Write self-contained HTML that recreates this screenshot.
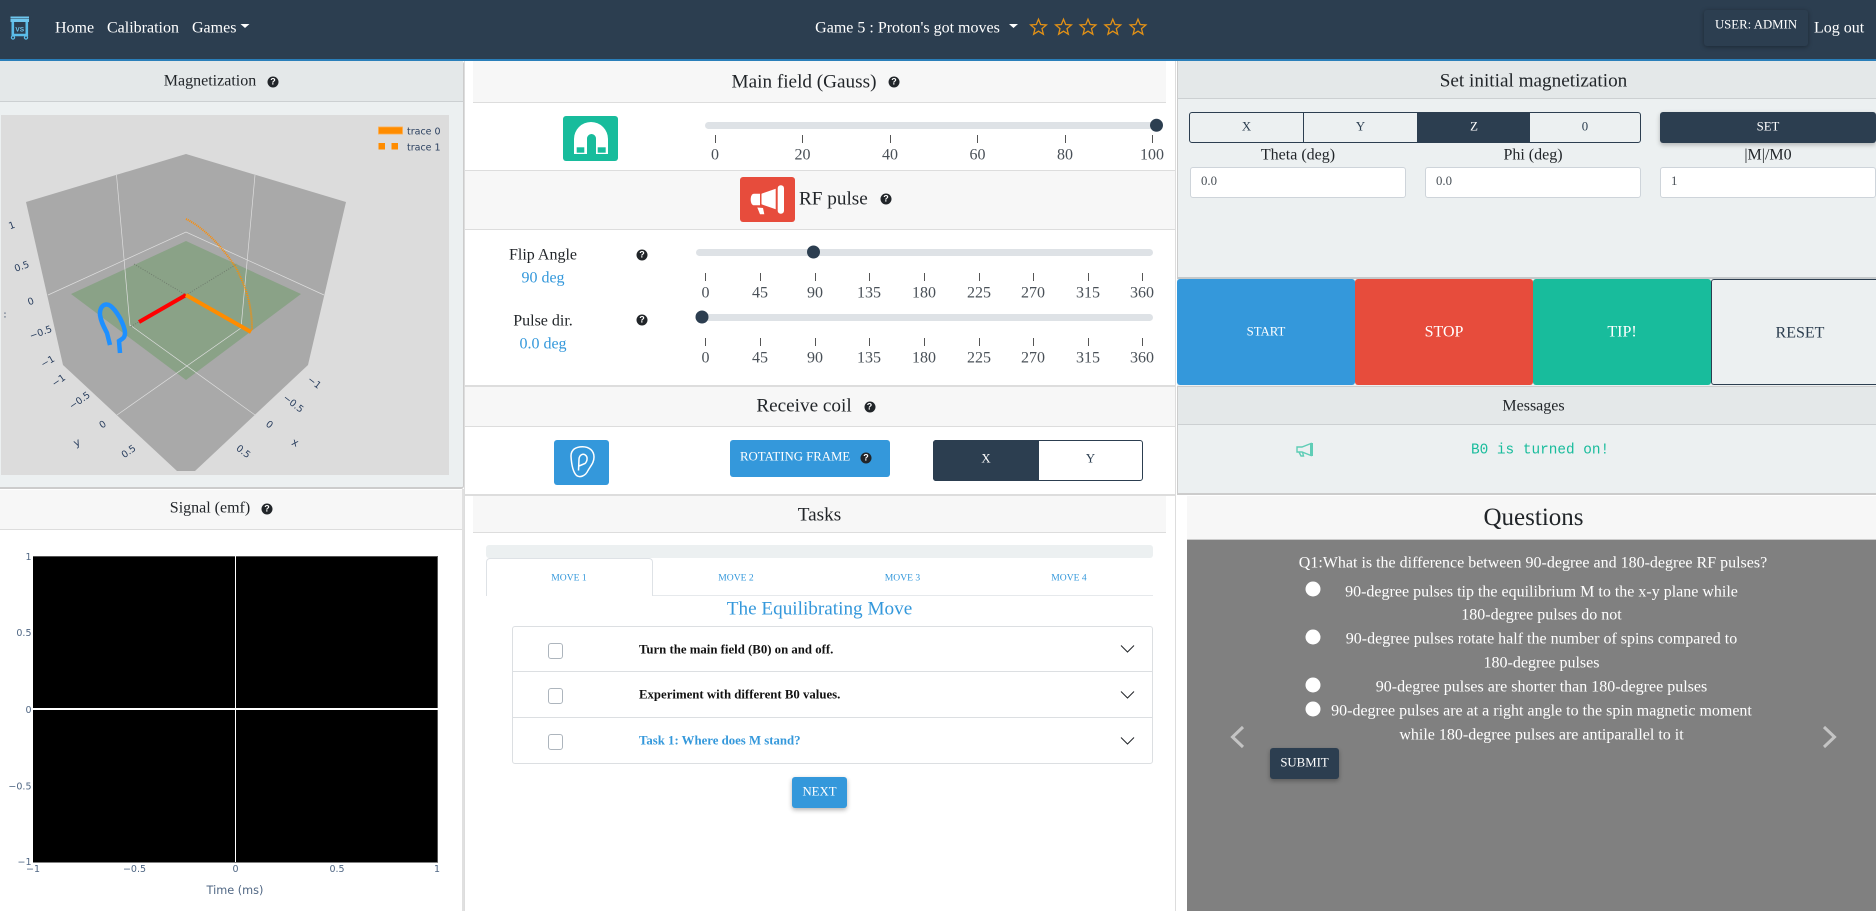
<!DOCTYPE html>
<html lang="en"><head><meta charset="utf-8"><title>Game 5 : Proton's got moves</title>
<style>
html,body{margin:0;padding:0;background:#fff}
body{width:1876px;height:911px;position:relative;overflow:hidden;font-family:"Liberation Serif",serif;color:#212529;font-size:16px}
.b{position:absolute;box-sizing:border-box}
.c{position:absolute;white-space:nowrap;transform:translate(-50%,-50%);line-height:1.2}
.l{position:absolute;white-space:nowrap;transform:translateY(-50%);line-height:1.2}
.h{position:absolute;width:11px;height:11px;border-radius:50%;background:#212529;color:#fff;font:bold 9px/11px "Liberation Sans",sans-serif;text-align:center;transform:translate(-50%,-50%)}
.w{color:#fff}.bl{color:#3498db}.s{font-size:19.2px}.m{font-size:12.8px}
.tk{color:#495057}
svg{position:absolute;left:0;top:0}
.ck{position:absolute;left:548px;width:15px;height:16px;border:1px solid #adb5bd;border-radius:3px;box-sizing:border-box;background:#fff}
.in{position:absolute;height:31px;width:216px;top:167px;background:#fff;border:1px solid #ced4da;border-radius:3px;box-sizing:border-box;font-size:12.8px;line-height:27px;padding-left:10px;color:#495057}
</style></head><body>

<!-- navbar -->
<div class="b" style="left:0;top:0;width:1876px;height:61px;background:#2c3e50;border-bottom:2px solid #2a7fba"></div>
<div class="b" style="left:1704px;top:10px;width:104px;height:36px;background:#2c3e50;border-radius:3px;box-shadow:0 1px 5px rgba(0,0,0,.35)"></div>

<!-- left column -->
<div class="b" style="left:0;top:61px;width:464px;height:428px;background:#ecf0f1;border-right:1px solid #ccc;border-bottom:2px solid #ccc;border-radius:0 3px 3px 0"></div>
<div class="b" style="left:0;top:61px;width:463px;height:41px;background:#e4e8e9;border-bottom:1px solid #ccd0d2"></div>
<div class="b" style="left:0;top:489px;width:464px;height:422px;background:#fff;border-right:2px solid #e0e0e0"></div>
<div class="b" style="left:0;top:490px;width:462px;height:40px;background:#f7f7f7;border-bottom:1px solid #ddd"></div>

<!-- middle column -->
<div class="b" style="left:464px;top:61px;width:712px;height:850px;background:#fff;border-left:1px solid #ddd;border-right:1px solid #ddd"></div>
<div class="b" style="left:473px;top:61px;width:693px;height:42px;background:#f7f7f7;border-bottom:1px solid #ddd"></div>
<div class="b" style="left:465px;top:170px;width:710px;height:60px;background:#f7f7f7;border-top:1px solid #ddd;border-bottom:1px solid #ddd"></div>
<div class="b" style="left:465px;top:385px;width:710px;height:42px;background:#f7f7f7;border-top:2px solid #ddd;border-bottom:1px solid #ddd"></div>
<div class="b" style="left:465px;top:494px;width:710px;height:2px;background:#ddd"></div>
<div class="b" style="left:473px;top:496px;width:693px;height:37px;background:#f7f7f7;border-bottom:1px solid #ddd"></div>

<!-- tabs -->
<div class="b" style="left:486px;top:545px;width:667px;height:13px;background:#ecf0f1;border-radius:3px"></div>
<div class="b" style="left:486px;top:595px;width:667px;height:1px;background:#e6e9ec"></div>
<div class="b" style="left:486px;top:558px;width:167px;height:38px;background:#fff;border:1px solid #dee2e6;border-bottom:0;border-radius:4px 4px 0 0"></div>

<!-- task list -->
<div class="b" style="left:512px;top:626px;width:641px;height:138px;background:#fff;border:1px solid #dcdfe2;border-radius:3px"></div>
<div class="b" style="left:513px;top:671px;width:639px;height:1px;background:#dcdfe2"></div>
<div class="b" style="left:513px;top:717px;width:639px;height:1px;background:#dcdfe2"></div>
<div class="ck" style="top:643px"></div><div class="ck" style="top:688px"></div><div class="ck" style="top:734px"></div>
<div class="b" style="left:792px;top:777px;width:55px;height:31px;background:#3498db;border-radius:3px;box-shadow:0 2px 5px rgba(0,0,0,.3)"></div>

<!-- icon buttons -->
<div class="b" style="left:563px;top:116px;width:55px;height:45px;background:#18bc9c;border-radius:3px"></div>
<div class="b" style="left:740px;top:177px;width:55px;height:45px;background:#e74c3c;border-radius:3px"></div>
<div class="b" style="left:554px;top:440px;width:55px;height:45px;background:#3498db;border-radius:3px"></div>
<div class="b" style="left:730px;top:440px;width:160px;height:37px;background:#3498db;border-radius:3px"></div>
<div class="b" style="left:933px;top:440px;width:210px;height:41px;background:#fff;border:1px solid #2c3e50;border-radius:3px"></div>
<div class="b" style="left:933px;top:440px;width:106px;height:41px;background:#2c3e50;border-radius:3px 0 0 3px"></div>

<!-- right column -->
<div class="b" style="left:1177px;top:61px;width:699px;height:218px;background:#ecf0f1;border-left:1px solid #ccc;border-bottom:2px solid #c4c8ca"></div>
<div class="b" style="left:1177px;top:61px;width:699px;height:38px;background:#e4e8e9;border-bottom:1px solid #ccd0d2;border-left:1px solid #ccc"></div>
<div class="b" style="left:1189px;top:112px;width:452px;height:31px;border:1px solid #2c3e50;border-radius:3px"></div>
<div class="b" style="left:1303px;top:112px;width:1px;height:31px;background:#2c3e50"></div>
<div class="b" style="left:1417px;top:112px;width:113px;height:31px;background:#2c3e50"></div>
<div class="b" style="left:1660px;top:112px;width:216px;height:31px;background:#2c3e50;border-radius:3px;box-shadow:0 2px 5px rgba(0,0,0,.25)"></div>
<div class="in" style="left:1190px">0.0</div><div class="in" style="left:1425px">0.0</div><div class="in" style="left:1660px">1</div>

<div class="b" style="left:1177px;top:279px;width:699px;height:107px;background:#ecf0f1"></div>
<div class="b" style="left:1177px;top:279px;width:178px;height:106px;background:#3498db;border-radius:3px"></div>
<div class="b" style="left:1355px;top:279px;width:178px;height:106px;background:#e74c3c;border-radius:3px"></div>
<div class="b" style="left:1533px;top:279px;width:178px;height:106px;background:#18bc9c;border-radius:3px"></div>
<div class="b" style="left:1711px;top:279px;width:170px;height:106px;background:#ecf0f1;border:1px solid #2c3e50;border-radius:3px"></div>

<div class="b" style="left:1177px;top:386px;width:699px;height:109px;background:#ecf0f1;border-left:1px solid #ccc;border-top:1px solid #ccc;border-bottom:2px solid #ccc"></div>
<div class="b" style="left:1177px;top:386px;width:699px;height:39px;background:#e4e8e9;border-bottom:1px solid #ccd0d2;border-left:1px solid #ccc;border-top:1px solid #ccc"></div>

<div class="b" style="left:1187px;top:496px;width:689px;height:44px;background:#f7f7f7;border-bottom:1px solid #ccc"></div>
<div class="b" style="left:1187px;top:540px;width:689px;height:371px;background:#808080"></div>
<div class="b" style="left:1270px;top:748px;width:69px;height:31px;background:#2c3e50;border-radius:3px;box-shadow:0 2px 5px rgba(0,0,0,.3)"></div>

<!-- shapes and plots -->
<svg width="1876" height="911" viewBox="0 0 1876 911">
<!-- logo -->
<g fill="#6ec6ee">
<rect x="10.5" y="16.5" width="18.5" height="2"/><rect x="10.5" y="19" width="18.5" height="3"/>
</g>
<path d="M12.8 22V35H26.8V22" fill="none" stroke="#5bbde9" stroke-width="2.6"/>
<circle cx="13" cy="37.5" r="1.6" fill="none" stroke="#5bbde9" stroke-width="1.2"/><circle cx="26" cy="37.5" r="1.6" fill="none" stroke="#5bbde9" stroke-width="1.2"/>
<text x="19.7" y="31.5" text-anchor="middle" font-family="Liberation Sans" font-weight="bold" font-size="6.5" fill="#6ec6ee">VS</text>
<!-- nav carets -->
<path d="M240.5 24H249.5L245 28Z M1009 24H1018L1013.5 28Z" fill="#fff"/>
<!-- stars -->
<g fill="none" stroke="#e29116" stroke-width="1.4" stroke-linejoin="miter">
<polygon transform="translate(1038.5 27.5) scale(.92)" points="0,-9 2.35,-3.24 8.56,-2.78 3.8,1.24 5.29,7.28 0,4 -5.29,7.28 -3.8,1.24 -8.56,-2.78 -2.35,-3.24"/>
<polygon transform="translate(1063.5 27.5) scale(.92)" points="0,-9 2.35,-3.24 8.56,-2.78 3.8,1.24 5.29,7.28 0,4 -5.29,7.28 -3.8,1.24 -8.56,-2.78 -2.35,-3.24"/>
<polygon transform="translate(1088 27.5) scale(.92)" points="0,-9 2.35,-3.24 8.56,-2.78 3.8,1.24 5.29,7.28 0,4 -5.29,7.28 -3.8,1.24 -8.56,-2.78 -2.35,-3.24"/>
<polygon transform="translate(1112.8 27.5) scale(.92)" points="0,-9 2.35,-3.24 8.56,-2.78 3.8,1.24 5.29,7.28 0,4 -5.29,7.28 -3.8,1.24 -8.56,-2.78 -2.35,-3.24"/>
<polygon transform="translate(1138 27.5) scale(.92)" points="0,-9 2.35,-3.24 8.56,-2.78 3.8,1.24 5.29,7.28 0,4 -5.29,7.28 -3.8,1.24 -8.56,-2.78 -2.35,-3.24"/>
</g>

<!-- 3D plot -->
<rect x="1" y="115" width="448" height="360" fill="#dcdcdc"/>
<polygon points="26,202 186,154 346,202 308,365 195,471 177,471 63,365" fill="#a9a9a9"/>
<polygon points="71,294 186,241 301,294 186,380" fill="#8aa287"/>
<g stroke="#dedede" fill="none" stroke-width="0.7">
<path d="M116.5 175L130 326M255 175L241 328M48 295L186 232L324 295M130 325L255 415M241 328L117 415"/>
</g>
<g stroke="#6f7c6d" fill="none" stroke-width="1" stroke-dasharray="1 1.5">
<path d="M134 264L186 295L237 264M186 295L130 327"/>
</g>
<path d="M186 295L139 322" stroke="#ff0000" stroke-width="4" fill="none"/>
<path d="M186 295L251 332" stroke="#ff8c00" stroke-width="4" fill="none"/>
<path d="M186 219C205 228 225 250 236 268C246 287 252 305 252 330" stroke="#ff8c00" stroke-width="2" stroke-dasharray="1 1" fill="none"/>
<path d="M110 345L107 333C104 327 101 322 100 315C99.5 308 103 304 107 304.5C112 305 117 313 120 318C123 324 125 329 125 333C125 338 122 339 119 341L120 353" stroke="#1e90ff" stroke-width="4.5" fill="none"/>
<g font-family="DejaVu Sans" font-size="9.5" fill="#2a3f5f">
<text x="407" y="134.5">trace 0</text><text x="407" y="150.5">trace 1</text>
<g text-anchor="middle" dominant-baseline="central">
<text x="12" y="226" transform="rotate(-20 12 226)">1</text>
<text x="22" y="267" transform="rotate(-20 22 267)">0.5</text>
<text x="31" y="302" transform="rotate(-20 31 302)">0</text>
<text x="41" y="333" transform="rotate(-20 41 333)">−0.5</text>
<text x="48" y="362" transform="rotate(-30 48 362)">−1</text>
<text x="59" y="381" transform="rotate(-35 59 381)">−1</text>
<text x="80" y="401" transform="rotate(-35 80 401)">−0.5</text>
<text x="103" y="425" transform="rotate(-35 103 425)">0</text>
<text x="129" y="452" transform="rotate(-35 129 452)">0.5</text>
<text x="77" y="443" font-size="10.5" transform="rotate(-25 77 443)">y</text>
<text x="314" y="383" transform="rotate(38 314 383)">−1</text>
<text x="293" y="404" transform="rotate(38 293 404)">−0.5</text>
<text x="269" y="425" transform="rotate(38 269 425)">0</text>
<text x="243" y="452" transform="rotate(38 243 452)">0.5</text>
<text x="295" y="443" font-size="10.5" transform="rotate(25 295 443)">x</text>
<text x="5" y="315">:</text>
</g></g>
<rect x="378.5" y="127" width="24" height="7" fill="#ff8c00" stroke="#ffad4d" stroke-width=".8"/>
<rect x="378.5" y="143" width="6.5" height="6.5" fill="#ff8c00"/><rect x="391.5" y="143" width="6.5" height="6.5" fill="#ff8c00"/>

<!-- signal plot -->
<rect x="33" y="556" width="405" height="306.5" fill="#000"/>
<path d="M33 556.5H438" stroke="#555" stroke-width="1"/><path d="M437.5 556V862" stroke="#555" stroke-width="1"/>
<path d="M235.5 556V862" stroke="#fff" stroke-width="1"/><path d="M33 709H438" stroke="#fff" stroke-width="2"/>
<g font-family="DejaVu Sans" font-size="9.5" fill="#506784">
<g text-anchor="end"><text x="31.5" y="560">1</text><text x="31.5" y="636">0.5</text><text x="31.5" y="713">0</text><text x="31.5" y="789.5">−0.5</text><text x="31.5" y="865">−1</text></g>
<g text-anchor="middle"><text x="33" y="872">−1</text><text x="134.5" y="872">−0.5</text><text x="235.5" y="872">0</text><text x="337" y="872">0.5</text><text x="437" y="872">1</text></g>
<text x="235" y="894" text-anchor="middle" font-size="11.3">Time (ms)</text>
</g>

<!-- magnet -->
<path d="M574 154V139a17 17 0 0 1 34 0V154H596V138.5a4.5 4.5 0 0 0-9 0V154Z" fill="#fff"/>
<rect x="576.7" y="147.3" width="7.6" height="5.4" fill="#18bc9c"/><rect x="597.7" y="147.3" width="8" height="5.4" fill="#18bc9c"/>
<!-- megaphone -->
<g fill="#fff">
<path d="M760 193.7V205.3H754C752 205.3 750.7 203 750.7 199.5C750.7 196 752 193.7 754 193.7Z"/>
<path d="M761.5 193.7L775.7 188.7V209.3L761.5 204.3Z"/>
<rect x="777.7" y="185.3" width="6.3" height="28.4" rx="3"/>
<path d="M757.3 207.5L763 208L764.3 214.3H760Z"/>
</g>
<!-- ear -->
<g fill="none" stroke="#fff" stroke-width="1.5">
<path d="M576.5 475.5C573 472 571.5 465 571 456C571 449.5 576 446.7 582.5 446.7C589.5 446.7 594 451 594 457C594 463 590.5 466 588 470.5C585.5 476 580 478 576.5 475.5Z"/>
<path d="M578.5 470.5L579 459C579.5 454.5 583 453.5 585 454.8C588 456.5 587.5 461 585 463.5L579 466"/>
</g>

<!-- sliders -->
<g fill="#dee2e6">
<rect x="705" y="122" width="457" height="7" rx="3.5"/>
<rect x="696" y="249" width="457" height="7" rx="3.5"/>
<rect x="696" y="314" width="457" height="7" rx="3.5"/>
</g>
<g fill="#2c3e50">
<circle cx="1156.5" cy="125.3" r="6.5"/><circle cx="813.5" cy="252" r="6.5"/><circle cx="702" cy="317" r="6.5"/>
</g>
<g stroke="#555" stroke-width="1">
<path d="M715.5 135V143M802.5 135V143M890.5 135V143M977.5 135V143M1065.5 135V143M1152.5 135V143"/>
<path d="M705.5 273V281M760.5 273V281M815.5 273V281M869.5 273V281M924.5 273V281M979.5 273V281M1033.5 273V281M1088.5 273V281M1142.5 273V281"/>
<path d="M705.5 338V346M760.5 338V346M815.5 338V346M869.5 338V346M924.5 338V346M979.5 338V346M1033.5 338V346M1088.5 338V346M1142.5 338V346"/>
</g>

<!-- chevrons -->
<g fill="none" stroke="#212529" stroke-width="1">
<path d="M1121 645.5L1127.5 652L1134 645.5M1121 691.5L1127.5 698L1134 691.5M1121 737.5L1127.5 744L1134 737.5"/>
</g>
<!-- message horn -->
<g fill="none" stroke="#5fcdb6" stroke-width="1.4">
<path d="M1297 447H1302L1311 443.5V455.5L1302 452H1297Z"/><path d="M1299 452L1301 456H1303.5L1302.5 452"/><path d="M1311.5 443V456" stroke-width="3"/>
</g>
<!-- radios -->
<g fill="#fff"><circle cx="1313" cy="589" r="7.5"/><circle cx="1313" cy="637" r="7.5"/><circle cx="1313" cy="685" r="7.5"/><circle cx="1313" cy="709" r="7.5"/></g>
<!-- carousel arrows -->
<g fill="none" stroke="#c4c4c4" stroke-width="3"><path d="M1243 727L1232.5 737L1243 747M1824 727L1834.5 737L1824 747"/></g>
</svg>

<!-- nav text -->
<div class="l w" style="left:55px;top:28px">Home</div>
<div class="l w" style="left:107px;top:28px">Calibration</div>
<div class="l w" style="left:192px;top:28px">Games</div>
<div class="c w" style="left:907.5px;top:28px">Game 5 : Proton's got moves</div>
<div class="c w m" style="left:1756px;top:25px">USER: ADMIN</div>
<div class="l w" style="left:1814px;top:28px">Log out</div>

<!-- headers -->
<div class="c" style="left:210px;top:81px">Magnetization</div><div class="h" style="left:273px;top:81.5px">?</div>
<div class="c" style="left:210px;top:508px">Signal (emf)</div><div class="h" style="left:267px;top:509px">?</div>
<div class="c s" style="left:804px;top:82px">Main field (Gauss)</div><div class="h" style="left:894px;top:82px">?</div>
<div class="l s" style="left:799px;top:199px">RF pulse</div><div class="h" style="left:886px;top:199px">?</div>
<div class="c s" style="left:804px;top:406px">Receive coil</div><div class="h" style="left:869.5px;top:406.5px">?</div>
<div class="c s" style="left:819.5px;top:515px">Tasks</div>
<div class="c s" style="left:1533.5px;top:81px">Set initial magnetization</div>
<div class="c" style="left:1533.5px;top:406px">Messages</div>
<div class="c" style="left:1533.5px;top:518px;font-size:25px">Questions</div>

<!-- slider labels -->
<div class="c tk" style="left:715px;top:155px">0</div><div class="c tk" style="left:802.5px;top:155px">20</div><div class="c tk" style="left:890px;top:155px">40</div><div class="c tk" style="left:977.5px;top:155px">60</div><div class="c tk" style="left:1065px;top:155px">80</div><div class="c tk" style="left:1152px;top:155px">100</div>
<div class="c" style="left:543px;top:255px">Flip Angle</div><div class="h" style="left:642px;top:254.5px">?</div>
<div class="c bl" style="left:543px;top:278px">90 deg</div>
<div class="c tk" style="left:705.5px;top:293px">0</div><div class="c tk" style="left:760px;top:293px">45</div><div class="c tk" style="left:815px;top:293px">90</div><div class="c tk" style="left:869px;top:293px">135</div><div class="c tk" style="left:924px;top:293px">180</div><div class="c tk" style="left:979px;top:293px">225</div><div class="c tk" style="left:1033px;top:293px">270</div><div class="c tk" style="left:1088px;top:293px">315</div><div class="c tk" style="left:1142px;top:293px">360</div>
<div class="c" style="left:543px;top:321px">Pulse dir.</div><div class="h" style="left:642px;top:319.5px">?</div>
<div class="c bl" style="left:543px;top:344px">0.0 deg</div>
<div class="c tk" style="left:705.5px;top:358px">0</div><div class="c tk" style="left:760px;top:358px">45</div><div class="c tk" style="left:815px;top:358px">90</div><div class="c tk" style="left:869px;top:358px">135</div><div class="c tk" style="left:924px;top:358px">180</div><div class="c tk" style="left:979px;top:358px">225</div><div class="c tk" style="left:1033px;top:358px">270</div><div class="c tk" style="left:1088px;top:358px">315</div><div class="c tk" style="left:1142px;top:358px">360</div>

<!-- receive coil controls -->
<div class="l w m" style="left:740px;top:457px">ROTATING FRAME</div><div class="h" style="left:866px;top:458px">?</div>
<div class="c w m" style="left:986px;top:459px">X</div>
<div class="c m" style="left:1090.5px;top:459px;color:#2c3e50">Y</div>

<!-- tasks -->
<div class="c bl" style="left:569px;top:578px;font-size:9.6px">MOVE 1</div>
<div class="c bl" style="left:736px;top:578px;font-size:9.6px">MOVE 2</div>
<div class="c bl" style="left:902.5px;top:578px;font-size:9.6px">MOVE 3</div>
<div class="c bl" style="left:1069px;top:578px;font-size:9.6px">MOVE 4</div>
<div class="c bl s" style="left:819.5px;top:609px">The Equilibrating Move</div>
<div class="l m" style="left:639px;top:650px;font-weight:bold;color:#111">Turn the main field (B0) on and off.</div>
<div class="l m" style="left:639px;top:695px;font-weight:bold;color:#111">Experiment with different B0 values.</div>
<div class="l m bl" style="left:639px;top:741px;font-weight:bold">Task 1: Where does M stand?</div>
<div class="c w m" style="left:819.5px;top:792px">NEXT</div>

<!-- right controls -->
<div class="c m" style="left:1246.5px;top:127px;color:#2c3e50">X</div>
<div class="c m" style="left:1360.5px;top:127px;color:#2c3e50">Y</div>
<div class="c w m" style="left:1474px;top:127px">Z</div>
<div class="c m" style="left:1585px;top:127px;color:#2c3e50">0</div>
<div class="c w m" style="left:1768px;top:127px">SET</div>
<div class="c" style="left:1298px;top:155px">Theta (deg)</div>
<div class="c" style="left:1533px;top:155px">Phi (deg)</div>
<div class="c" style="left:1768px;top:155px">|M|/M0</div>

<div class="c w m" style="left:1266px;top:332px">START</div>
<div class="c w" style="left:1444px;top:332px">STOP</div>
<div class="c w" style="left:1622px;top:332px">TIP!</div>
<div class="c" style="left:1800px;top:333px;color:#2c3e50">RESET</div>

<div class="l" style="left:1471px;top:451px;font-family:'Liberation Mono',monospace;font-size:14.4px;color:#18bc9c">B0 is turned on!</div>

<!-- questions -->
<div class="c w" style="left:1533px;top:563px">Q1:What is the difference between 90-degree and 180-degree RF pulses?</div>
<div class="c w" style="left:1541.5px;top:592px">90-degree pulses tip the equilibrium M to the x-y plane while</div>
<div class="c w" style="left:1541.5px;top:615px">180-degree pulses do not</div>
<div class="c w" style="left:1541.5px;top:639px">90-degree pulses rotate half the number of spins compared to</div>
<div class="c w" style="left:1541.5px;top:663px">180-degree pulses</div>
<div class="c w" style="left:1541.5px;top:687px">90-degree pulses are shorter than 180-degree pulses</div>
<div class="c w" style="left:1541.5px;top:711px">90-degree pulses are at a right angle to the spin magnetic moment</div>
<div class="c w" style="left:1541.5px;top:735px">while 180-degree pulses are antiparallel to it</div>
<div class="c w m" style="left:1304.5px;top:763px">SUBMIT</div>
</body></html>
